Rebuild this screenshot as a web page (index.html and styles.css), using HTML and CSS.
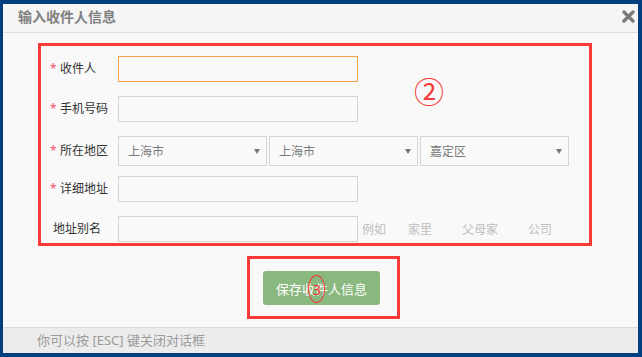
FILE: index.html
```html
<!DOCTYPE html>
<html lang="zh-CN">

<head>
    <meta charset="UTF-8" />
    <meta name="viewport" content="width=device-width, initial-scale=1.0" />
    <title>输入收件人信息</title>

    <link rel="stylesheet" href="styles.css">
</head>

<body>

    <div class="dialog">
        <div class="dialog-head">
            <h3 class="dialog-title">输入收件人信息</h3>
            <span class="close-btn">
                <svg width="13" height="13" viewBox="0 0 13 13">
                    <path d="M2 2 L11 11 M11 2 L2 11" stroke="#7a7a7a" stroke-width="3.4" stroke-linecap="round" fill="none" />
                </svg>
            </span>
        </div>

        <div class="dialog-body">
            <form class="addr-form">
                <span class="mark-num">②</span>

                <div class="form-row">
                    <label class="form-label"><i class="req">*</i>收件人</label>
                    <input class="form-input is-focus" type="text">
                </div>

                <div class="form-row">
                    <label class="form-label"><i class="req">*</i>手机号码</label>
                    <input class="form-input" type="text">
                </div>

                <div class="form-row row-select">
                    <label class="form-label"><i class="req">*</i>所在地区</label>
                    <div class="select-group">
                        <div class="select">上海市<span class="arrow"></span></div>
                        <div class="select">上海市<span class="arrow"></span></div>
                        <div class="select">嘉定区<span class="arrow"></span></div>
                    </div>
                </div>

                <div class="form-row">
                    <label class="form-label"><i class="req">*</i>详细地址</label>
                    <input class="form-input" type="text">
                </div>

                <div class="form-row last-row">
                    <label class="form-label no-req">地址别名</label>
                    <input class="form-input" type="text">
                    <div class="alias-tags">
                        <span class="tag-hint">例如</span>
                        <span class="tag">家里</span>
                        <span class="tag">父母家</span>
                        <span class="tag">公司</span>
                    </div>
                </div>
            </form>

            <div class="save-wrap">
                <button class="save-btn" type="button">保存收件人信息</button>
                <span class="mark-oval">3</span>
            </div>
        </div>

        <div class="dialog-foot">你可以按 [ESC] 键关闭对话框</div>
    </div>

</body>

</html>
```

FILE: styles.css
```css
* {
    margin: 0;
    padding: 0;
    box-sizing: border-box;
}

body {
    background-color: #023f7e;
    font-family: "Noto Sans", "Noto Sans CJK SC", sans-serif;
    overflow: hidden;
}

.dialog {
    height: 349px;
    margin: 4px 4px 4px 3px;
    display: flex;
    flex-direction: column;
    background-color: #f9f9f9;
}

/* header */
.dialog-head {
    height: 29px;
    padding: 5px 3px 0 15px;
    display: flex;
    justify-content: space-between;
    align-items: flex-start;
    background-color: #f5f5f5;
    border-bottom: 1px solid #dedede;
}

.dialog-title {
    font-size: 14px;
    line-height: 16px;
    font-weight: bold;
    color: #808080;
}

.close-btn {
    display: block;
    height: 13px;
    margin-top: 1px;
    cursor: pointer;
}

.close-btn svg {
    display: block;
}

/* body */
.dialog-body {
    flex: 1;
    display: flex;
    flex-direction: column;
    padding-top: 10px;
}

.addr-form {
    position: relative;
    width: 554px;
    margin-left: 35px;
    padding: 10px 0 1px 0;
    border: 3px solid #fa3939;
}

.mark-num {
    position: absolute;
    left: 373px;
    top: 31px;
    font-family: "DejaVu Serif", "Noto Sans CJK SC", serif;
    font-size: 30px;
    line-height: 32px;
    color: #f53a3a;
}

.form-row {
    display: flex;
    align-items: center;
    margin-bottom: 14px;
}

.row-select {
    margin-bottom: 10px;
}

.last-row {
    margin-bottom: 0;
}

.form-label {
    width: 77px;
    padding-left: 9px;
    font-size: 12px;
    line-height: 16px;
    color: #333;
}

.form-label.no-req {
    padding-left: 12px;
}

.req {
    display: inline-block;
    width: 10px;
    font-style: normal;
    color: #f4516c;
}

.form-input {
    width: 240px;
    height: 26px;
    border: 1px solid #d4d4d4;
    background-color: #fafafa;
    outline: none;
}

.form-input.is-focus {
    border-color: #f3a14a;
}

.select-group {
    display: flex;
    gap: 2px;
}

.select {
    width: 149px;
    height: 30px;
    padding: 0 6px 0 9px;
    display: flex;
    justify-content: space-between;
    align-items: center;
    border: 1px solid #d4d4d4;
    font-size: 12px;
    color: #7a7a7a;
    background-color: #fafafa;
}

.arrow {
    width: 0;
    height: 0;
    border-left: 3px solid transparent;
    border-right: 3px solid transparent;
    border-top: 5px solid #777;
}

.alias-tags {
    display: flex;
    margin-left: 4px;
    font-size: 12px;
    color: #bdbdbd;
}

.tag {
    margin-left: 22px;
    cursor: pointer;
}

.tag + .tag {
    margin-left: 30px;
}

/* save button */
.save-wrap {
    position: relative;
    align-self: center;
    margin: 10px 0 0 6px;
    padding: 12px 17px 11px 13px;
    border: 3px solid #fa3939;
}

.save-btn {
    display: block;
    width: 117px;
    height: 34px;
    border: none;
    border-radius: 3px;
    background-color: #89b97f;
    color: #fff;
    font-family: "Noto Sans", "Noto Sans CJK SC", sans-serif;
    font-size: 13px;
    cursor: pointer;
}

/* annotation over the button */
.mark-oval {
    position: absolute;
    left: 58px;
    top: 16px;
    width: 17px;
    height: 28px;
    border: 1px solid #f33;
    border-radius: 50%;
    font-size: 15px;
    line-height: 26px;
    text-align: center;
    color: #f33;
}

/* footer */
.dialog-foot {
    height: 26px;
    padding: 3px 0 0 34px;
    border-top: 1px solid #dcdcdc;
    background-color: #ececec;
    font-size: 13px;
    line-height: 18px;
    color: #9a9a9a;
}
```
